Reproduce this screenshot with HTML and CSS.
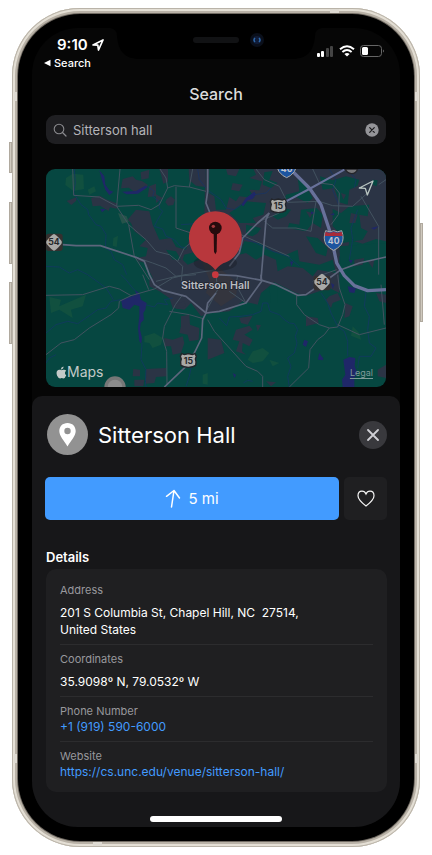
FILE: index.html
```html
<!DOCTYPE html>
<html lang="en">
<head>
<meta charset="utf-8">
<meta name="viewport" content="width=device-width, initial-scale=1">
<title>Sitterson Hall</title>
<link rel="stylesheet" href="styles.css">
</head>
<body>
<div class="phone">
  <i class="key key-mute"></i><i class="key key-up"></i><i class="key key-down"></i><i class="key key-power"></i>
  <i class="band band-top"></i><i class="band band-left-top"></i><i class="band band-right-top"></i>
  <i class="band band-left-low"></i><i class="band band-right-low"></i><i class="band band-bottom"></i>
  <div class="bezel">
    <svg class="notch" viewBox="0 0 212 31" aria-hidden="true">
      <path d="M0 0H212Q205 1 205 8C204 22 198 31 182 31H30C14 31 8 22 7 8Q7 1 0 0Z" fill="#000"/>
      <rect x="83" y="9" width="46" height="6" rx="3" fill="#111214"/>
      <circle cx="147" cy="12" r="7" fill="#0a0f1a"/>
      <circle cx="147" cy="12" r="4" fill="#101c38"/>
      <path d="M145 10q-2 2 0 4M149 10q2 2 0 4" stroke="#2d67a8" stroke-width="1.5" fill="none"/>
    </svg>
    <main class="screen">
      <header class="status">
        <div class="status-left">
          <div class="time">9:10
            <svg width="12" height="12" viewBox="0 0 12 12" aria-hidden="true"><path d="M1 6 11 1 6.500 11 5.800 6.200Z" fill="none" stroke="#fff" stroke-width="1.700" stroke-linejoin="round"/></svg>
          </div>
          <a class="back" href="#"><svg width="7" height="8" viewBox="0 0 7 8" aria-hidden="true"><path d="M0 4 6.500 .8V7.200Z" fill="#fff"/></svg>Search</a>
        </div>
        <div class="status-right">
          <svg width="17" height="12" viewBox="0 0 17 12" aria-hidden="true"><rect y="8" width="3" height="4" rx="1" fill="#fff"/><rect x="4" y="6" width="3" height="6" rx="1" fill="#fff"/><rect x="9" y="3" width="3" height="9" rx="1" fill="#444"/><rect x="13" y="1" width="3" height="11" rx="1" fill="#444"/></svg>
          <svg width="16" height="12" viewBox="0 0 16 12" aria-hidden="true"><path d="M1 4.300Q8-1.700 15 4.300M3.400 7Q8 3 12.600 7" fill="none" stroke="#fff" stroke-width="2"/><path d="M8 11.600 5.400 9Q8 7 10.600 9Z" fill="#fff"/></svg>
          <svg width="24" height="12" viewBox="0 0 24 12" aria-hidden="true"><rect x=".5" y=".5" width="21" height="11" rx="3" fill="none" stroke="#666"/><rect x="2" y="2" width="6" height="8" rx="1.500" fill="#fff"/><path d="M23 4.500Q24.500 6 23 7.500Z" fill="#888"/></svg>
        </div>
      </header>
      <h1 class="title">Search</h1>
      <form class="search">
        <svg width="14" height="14" viewBox="0 0 14 14" aria-hidden="true"><circle cx="6" cy="6" r="4.800" fill="none" stroke="#8a8a8e" stroke-width="1.100"/><path d="M9.500 9.500 13 13" stroke="#8a8a8e" stroke-width="1.200" stroke-linecap="round"/></svg>
        <input type="text" value="Sitterson hall" aria-label="Search">
        <button class="clear" type="button" aria-label="Clear"><svg width="14" height="14" viewBox="0 0 14 14"><circle cx="7" cy="7" r="6.700" fill="#949498"/><path d="M4.700 4.700 9.300 9.300M9.300 4.700 4.700 9.300" stroke="#1c1c1e" stroke-width="1.200" stroke-linecap="round"/></svg></button>
      </form>
      <section class="map" aria-label="Map">
        <svg class="map-art" viewBox="20 28 1020 654" preserveAspectRatio="xMidYMid slice">
          <defs>
            <g id="us"><path d="M-20-20-12-17 0-20 12-17 20-20 24-12 21-4Q25 6 22 15 15 20 0 21-15 20-22 15-25 6-21-4L-24-12Z" fill="#a9a9a7" stroke="#23252a" stroke-width="4"/></g>
            <g id="state"><path d="M0-25Q5-25 22-5 25 0 22 5 5 25 0 25-5 25-22 5-25 0-22-5-5-25 0-25Z" fill="#a9a9a7"/></g>
            <g id="interstate"><path d="M-24-29Q-10-22 0-29 10-22 24-29 33-5 23 12 12 26 0 30-12 26-23 12-33-5-24-29Z" fill="#1d55a0" stroke="#a9a9a7" stroke-width="3"/><path d="M-24-26Q-10-20 0-26 10-20 24-26L27-13H-27Z" fill="#a72c3a"/></g>
          </defs>
          <rect x="20" y="28" width="1020" height="654" fill="#064741"/>
          <g fill="#11503f"><path d="M80 55 100 42 132 45 134 88 102 94 78 76Z"/><path d="M145 90 165 80 170 95 150 105Z"/><path d="M222 235 236 228 232 262 220 258Z"/><path d="M30 412 65 420 60 440 105 420 140 405 130 440 95 450 100 475 60 450 35 460Z"/><path d="M315 530 345 520 370 535 365 555 340 565 330 550 315 548Z"/><path d="M640 575 670 565 690 580 670 605 640 610 625 600Z"/><path d="M690 600 720 610 700 620Z"/><path d="M490 645 505 640 505 675 490 672Z"/><path d="M940 500 960 520 965 540 935 528Z"/></g>
          <path d="M236 160 262 170 268 186 248 192Z" fill="#26534a"/>
          <g fill="#2b3445">
            <path d="M498 28H1040V245L1010 238 970 252 930 240 925 285 900 290 900 400 870 385 840 395 800 408 770 400 705 368 665 400 655 435 610 425 570 455 515 460 485 470 455 430 435 450 400 445 390 415 360 395 330 380 330 345 290 295 320 290 325 265 300 260 320 240 285 215 275 190 265 180 290 150 330 155 340 195 360 240 395 235 410 262 440 270 455 220 470 195 495 170Z"/>
            <path d="M155 115 182 108 198 118 235 132 232 147 212 143 208 154 182 138 160 140Z"/><path d="M82 124 112 112 110 124 96 136Z"/><path d="M250 58 280 50 290 60 308 64 326 76 316 90 285 96 268 84 245 86Z"/><path d="M304 38 330 30 328 56 306 60Z"/><path d="M360 28H386V66L372 72 366 48Z"/><path d="M330 80 350 72 350 104 370 115 350 130 350 110 325 112Z"/><path d="M382 118 395 110 407 120 402 136 386 138 378 128Z"/><path d="M448 28H498V82L470 78 450 62Z"/>
            <path d="M402 435 435 425 440 440 412 448Z"/><path d="M425 470 450 465 452 495 480 505 478 540 450 545 445 525 420 520 425 500Z"/><path d="M375 535 400 540 430 530 435 550 425 580 400 585 395 560 375 560Z"/><path d="M320 628 380 625 382 650 350 652 345 670 320 672Z"/><path d="M282 628 302 630 302 650 280 650Z"/><path d="M285 660 315 660 312 680 285 680Z"/><path d="M505 535 545 540 555 580 505 600Z"/>
            <path d="M600 475 640 468 625 495 605 490Z"/><path d="M590 510 630 498 640 510 615 525 640 540 630 560 610 550 608 575 620 585 590 575 600 545 580 540Z"/><path d="M650 495 665 497 655 515Z"/><path d="M680 665 710 668 695 680Z"/><path d="M800 470 835 475 838 490 800 500Z"/><path d="M870 410 895 400 905 420 880 430 875 445 860 420Z"/><path d="M918 430 940 440 930 470 915 475Z"/><path d="M1015 630 1040 615V655L1015 650Z"/><path d="M950 300 985 288 980 310 955 318Z"/><path d="M1010 400 1040 405V430L1020 425Z"/>
          </g>
          <g fill="#064741">
            <path d="M510 28H642L650 45 630 55 668 65 660 92 630 90 645 115 600 110 590 125 570 112 560 150 530 150 525 110 508 100Z"/><path d="M675 38 700 34 690 60 715 70 695 85 670 75Z"/><path d="M570 160 620 125 680 130 672 165 640 175 650 190 600 190 585 175Z"/><path d="M775 52 800 80 820 115 805 130 765 110 735 120 740 105 780 95Z"/><path d="M842 50 880 62 920 50 960 60 955 78 930 90 925 135 900 128 885 85 850 90Z"/><path d="M785 150 832 145 850 165 845 205 820 190 800 215 745 205 750 190 780 195Z"/><path d="M700 170 730 145 755 150 740 170 715 180Z"/><path d="M880 148 905 160 930 140 990 135 985 170 960 165 965 205 985 215 970 240 910 250 905 225 880 200Z"/><path d="M620 195 665 205 655 220 640 230 620 225Z"/><path d="M615 245 660 250 700 275 740 285 775 270 780 305 840 315 880 300 890 340 835 330 820 350 790 325 745 320 715 335 710 300 675 285 650 300 620 280 600 285Z"/><path d="M800 230 835 235 865 265 860 290 830 280Z"/><path d="M900 260 1040 250V395L985 395 940 375 905 330Z"/><path d="M435 285 475 275 480 300 445 315 430 300Z"/><path d="M380 270 410 275 425 300 400 300Z"/><path d="M300 305 318 310 340 355 320 365Z"/><path d="M690 380 715 380 715 430 695 430Z"/><path d="M1000 60 1015 62 1012 80 1000 75Z"/>
          </g>
          <path d="M480 290 540 325 595 370 590 410 545 440 500 400 510 360Z" fill="#34353e"/>
          <g fill="#2b3445"><path d="M560 28 600 28 590 50 565 45Z"/><path d="M580 70 610 75 600 95 575 90Z"/><path d="M945 300 975 295 970 315 945 320Z"/><path d="M985 305 1005 300 1000 325Z"/><path d="M800 155 820 160 812 175Z"/><path d="M935 160 955 165 948 190 930 190Z"/><path d="M905 100 920 105 912 120Z"/></g>
          <g fill="#1f2768"><path d="M180 32 195 50 198 75 210 92 222 96 210 106 198 90 190 68Z"/><path d="M248 96 290 94 318 78 325 82 296 102 262 104Z"/><path d="M183 148 200 148 188 158Z"/><path d="M606 135 620 115 645 96 650 104 640 118 625 122 612 140Z"/><path d="M245 420 272 412 290 405 288 392 300 400 305 420 322 430 318 450 312 460 314 480 304 490 302 510 308 535 306 552 300 545 296 505 300 470 300 440 285 435 270 450 250 445Z"/><path d="M912 600 930 592 948 595 946 620 955 640 945 655 945 682H910L908 660 918 645Z"/><path d="M838 590 852 595 850 602 838 600Z"/><path d="M795 540 806 545 800 562 790 555Z"/><path d="M836 600 840 580 852 598Z"/><path d="M580 640 590 645 586 655Z"/><path d="M815 155 828 160 815 164Z"/><path d="M872 165 884 160 885 167Z"/><path d="M752 305 762 306 756 320Z"/><path d="M928 300 940 302 935 312Z"/><path d="M995 205 1018 200 1005 210Z"/><path d="M925 380 950 385 945 400 930 398Z"/><path d="M875 370 885 375 880 388Z"/></g>
          <g class="stream">
            <path d="M105 28 108 70 103 100 125 135 145 150 148 165 170 195 185 200 200 225 198 265 215 275 225 300 250 315 262 345"/><path d="M20 320 60 322 90 340 115 330 145 345 180 370 200 385 210 400 222 420"/><path d="M20 520 50 495 85 485 115 492 150 468 175 450 200 445 215 425 245 420"/><path d="M20 610 30 595 50 585"/><path d="M325 80 345 95 340 110 360 125 360 145 370 155 355 180 345 200 370 208 380 230 405 240 425 262 440 265"/><path d="M245 345 260 360 280 385 292 398"/><path d="M318 435 345 442 355 430 385 435 375 420 400 415"/><path d="M308 550 305 600 320 630 318 665 320 682"/><path d="M475 28 480 60 500 85"/><path d="M510 95 545 120 560 145 585 150 606 135M645 105 680 100 695 85"/><path d="M530 190 570 205 610 235 650 250 700 275 745 290 780 320"/><path d="M540 475 562 498 570 472 605 470 640 465 665 455 670 430 685 430 692 455 720 465 735 480 750 490 765 492 775 510 768 530 773 550 765 580 745 595 755 620 745 650 750 682"/><path d="M845 400 865 430 875 460 895 500 915 515 925 545 925 590"/><path d="M980 395 975 440 990 470 985 510 990 550 1010 565 995 590 960 590 955 625"/><path d="M955 150 935 205 940 240 930 300"/><path d="M925 28 950 60 945 85"/><path d="M612 670 625 662 640 665"/><path d="M460 600 450 650 440 680"/><path d="M870 28 890 60 880 90 900 140"/><path d="M425 195 470 192"/>
          </g>
          <g class="road">
            <path d="M100 28 103 107 180 112 232 140 268 195 285 290 330 360"/><path d="M242 28 232 140 298 137 335 150 360 135 385 85 380 55 362 28M385 85 405 78 450 82 500 95M450 82 460 28M410 82V205L455 220"/><path d="M268 195 320 240 350 275 390 285 415 305 430 320 426 365"/><path d="M415 305 435 265 460 245M290 293 340 310 380 325 410 350 530 330M350 365 410 350 470 345"/><path d="M20 407 130 405 210 380 240 388 275 408 345 388 400 355 440 345"/><path d="M20 585 65 550 105 540 150 505 215 465 238 445 240 425 275 408"/><path d="M430 405 408 435 375 500 370 535 382 575 383 675M390 455 450 465 495 478M310 345 328 390"/><path d="M505 480 525 515 620 620 655 635 670 650V682"/><path d="M772 407V435L795 465 840 495 870 505 895 502 910 465 917 435 900 385 895 345"/><path d="M895 495 960 525 1040 505M870 505 855 525 835 540 812 570 808 625 750 682"/><path d="M1025 375 1035 495M1018 200V345"/><path d="M650 28 675 60 720 80 735 110 745 128 840 125 880 138 940 140 990 95M820 28 840 70 880 75 900 100 897 165 875 195M830 125 815 215 770 205 700 205 675 185M965 110 1018 200M1040 60 1018 75"/><path d="M605 225 750 290M660 185 720 160M570 395 620 430M892 330 850 345 820 365M530 345 535 390 500 455M595 348 590 375 620 430"/>
          </g>
          <g class="road main"><path d="M505 28V95L500 130 512 160"/><path d="M70 255 110 258H183L290 293 315 305 330 345 345 375 370 392 440 410 500 460 540 455 620 430 667 365 665 345"/><path d="M530 345 590 348 668 362 710 375 775 407 800 405 850 370 905 330 960 310 1040 292"/><path d="M690 160 680 180 665 360M690 160 655 190 610 235 600 280 570 320"/><path d="M500 460 490 480 487 535 465 580 440 620 375 682M500 460 505 430 530 400"/></g>
          <g class="road highway"><path d="M760 35 810 85 845 135 870 210 882 262 892 310 915 348 945 378 985 393 1040 390"/><path class="us-road" d="M915 30 810 88 740 125"/></g>
          <rect x="20" y="222" width="50" height="52" rx="8" fill="#34302f"/><use href="#state" x="44" y="248"/>
          <rect x="823" y="348" width="50" height="44" rx="8" fill="#34302f"/><use href="#state" x="848" y="367"/>
          <use href="#us" x="717" y="138"/><use href="#us" x="447" y="602"/><use href="#interstate" x="883" y="242"/><use href="#interstate" x="742" y="24"/>
          <path d="M918 28H955Q950 42 937 42 922 40 918 28Z" fill="#77777a" stroke="#25262b" stroke-width="4"/>
          <g class="shield"><text x="44" y="257">54</text><text x="848" y="376">54</text><text x="717" y="148">15</text><text x="447" y="612">15</text><text class="light" x="883" y="253">40</text><text class="light" x="742" y="37">40</text></g>
          <path d="M960 85 1001 64 984 106 978 86Z" fill="none" stroke="#b8c4c0" stroke-width="4" stroke-linejoin="round"/>
          <circle cx="227" cy="682" r="32" fill="#777"/><circle cx="227" cy="682" r="22" fill="#8b8b8b"/>
          <ellipse cx="528" cy="310" rx="65" ry="24" fill="#15181e" opacity=".35"/>
          <path d="M528 155A80 80 0 0 1 560 308Q543 313 528 331 513 313 496 308A80 80 0 0 1 528 155Z" fill="#b8373c"/>
          <circle cx="528" cy="345" r="10" fill="#c8383e"/>
          <path d="M523 220H533L532 276 528 284 524 276Z" fill="#250b0d"/><circle cx="528" cy="205" r="19" fill="#250b0d"/><circle cx="522" cy="200" r="5" fill="#a3383c"/>
          <text class="place" x="528" y="388">Sitterson Hall</text>
        </svg>
        <div class="brand"><svg width="11" height="13" viewBox="0 0 22 26" aria-hidden="true"><path d="M15 1q.3 3-1.600 4.700-1.500 1.500-3.600 1.300Q9.600 2.500 15 1ZM20.500 18.500Q18 25 14.700 25q-1.200 0-3.200-.9-2 .9-3.200.9Q5 25 2.200 19.500-.2 13 2.500 9.500 5 6.500 8.500 7.600q2 .7 3 .7t3-.8q4-.8 6 2-5.400 4 0 9Z" fill="#c3cac8"/></svg>Maps</div>
        <a class="legal" href="#">Legal</a>
      </section>
      <section class="sheet">
        <div class="sheet-head">
          <svg class="place-icon" width="41" height="41" viewBox="0 0 41 41" aria-hidden="true"><circle cx="20.500" cy="20.500" r="20.500" fill="#929292"/><path d="M20.500 9C15.500 9 12.300 12.600 12.300 17 12.300 22 17 26.500 20.500 32.500 24 26.500 28.700 22 28.700 17 28.700 12.600 25.500 9 20.500 9Z" fill="#fff"/><circle cx="20.500" cy="17" r="3.200" fill="#929292"/></svg>
          <h2>Sitterson Hall</h2>
          <button class="close" type="button" aria-label="Close"><svg width="12" height="12" viewBox="0 0 12 12"><path d="M1 1 11 11M11 1 1 11" stroke="#d0d0d5" stroke-width="1.800" stroke-linecap="round"/></svg></button>
        </div>
        <div class="actions">
          <button class="go" type="button"><svg width="16" height="20" viewBox="0 0 16 20" aria-hidden="true"><path d="M6.500 18 9 1.500M1.500 7.300 9 1.500 14.500 9" fill="none" stroke="#fff" stroke-width="1.500" stroke-linecap="round" stroke-linejoin="round"/></svg>5 mi</button>
          <button class="fav" type="button" aria-label="Favorite"><svg width="18" height="17" viewBox="0 0 18 17"><path d="M9 16C5 13 1 10 1 5.800 1 3 2.700 1.200 5 1.200 6.800 1.200 8.200 2.200 9 4 9.800 2.200 11.200 1.200 13 1.200 15.300 1.200 17 3 17 5.800 17 10 13 13 9 16Z" fill="none" stroke="#f4f4f4" stroke-width="1.200"/></svg></button>
        </div>
        <h3>Details</h3>
        <dl class="card">
          <div class="row spaced"><dt>Address</dt><dd>201 S Columbia St, Chapel Hill, NC &nbsp;27514,<br>United States</dd></div>
          <div class="row spaced"><dt>Coordinates</dt><dd>35.9098º N, 79.0532º W</dd></div>
          <div class="row"><dt>Phone Number</dt><dd><a href="tel:+19195906000">+1 (919) 590-6000</a></dd></div>
          <div class="row"><dt>Website</dt><dd><a href="https://cs.unc.edu/venue/sitterson-hall/">https://cs.unc.edu/venue/sitterson-hall/</a></dd></div>
        </dl>
        <div class="home"></div>
      </section>
    </main>
  </div>
</div>
</body>
</html>
```
FILE: styles.css
```css
* { box-sizing: border-box; }
body { margin: 0; padding: 8px 12px; background: #fff; color: #fff; font-family: Inter, Roboto, "Liberation Sans", sans-serif; }
h1, h2, h3, dl, dd { margin: 0; font-weight: 400; }
a { color: inherit; text-decoration: none; }
button { padding: 0; border: 0; color: inherit; font: inherit; background: none; display: flex; align-items: center; justify-content: center; }
svg { display: block; flex: none; }

.phone { position: relative; padding: 6px; border-radius: 68px; background: #d6d0c5; box-shadow: inset 0 0 0 1px #b9b3a8, inset 0 0 0 3px #e4dfd5, inset 0 0 0 5px #b9b2a7; }
.bezel { position: relative; padding: 14px; border-radius: 62px; background: #000; box-shadow: 0 0 0 1px #716b63; }
.notch { position: absolute; z-index: 1; top: 14px; left: 50%; width: 212px; height: 31px; transform: translateX(-50%); }
.screen { overflow: hidden; border-radius: 46px; background: #060606; }

.key { position: absolute; width: 3px; background: #cfc9be; border: 1px solid #b0a99e; }
.key-mute { left: -3px; top: 134px; height: 31px; }
.key-up { left: -3px; top: 194px; height: 62px; }
.key-down { left: -3px; top: 274px; height: 62px; }
.key-power { right: -3px; top: 215px; height: 99px; }
.band { position: absolute; background: #dedad2; }
.band-top, .band-bottom { width: 9px; height: 5px; }
.band-left-top, .band-right-top, .band-left-low, .band-right-low { width: 4px; height: 9px; }
.band-top { top: 1px; right: 81px; }
.band-bottom { bottom: 1px; left: 81px; }
.band-left-top { left: 2px; top: 84px; }
.band-right-top { right: 2px; top: 84px; }
.band-left-low { left: 2px; bottom: 84px; }
.band-right-low { right: 2px; bottom: 84px; }

.status { display: flex; justify-content: space-between; padding: 8px 16px 0 12px; }
.time { display: flex; align-items: center; gap: 4px; padding-left: 13px; font-size: 15px; font-weight: 600; line-height: 18px; }
.back { display: flex; align-items: center; gap: 3px; margin-top: 2px; font-size: 11px; font-weight: 500; line-height: 14px; }
.status-right { display: flex; gap: 5px; padding-top: 9px; }
.title { margin-top: 14px; font-size: 16px; font-weight: 500; line-height: 20px; text-align: center; color: #dcdcdc; }

.search { display: flex; align-items: center; gap: 6px; height: 29px; margin: 11px 14px 0; padding: 0 7px; border-radius: 9px; background: #1f1f22; }
.search input { flex: 1; min-width: 0; padding: 0; border: 0; outline: 0; background: none; color: #b4b4b8; font: 13px/18px Inter, Roboto, sans-serif; }

.map { position: relative; overflow: hidden; margin: 25px 14px 0; border-radius: 9px; }
.map-art { width: 100%; height: auto; }
.stream { fill: none; stroke: #15356a; stroke-width: 2; stroke-linejoin: round; }
.road { fill: none; stroke: #435360; stroke-width: 3; stroke-linejoin: round; }
.main { stroke: #5d667c; stroke-width: 5; }
.highway { stroke: #68719a; stroke-width: 10; }
.us-road { stroke-width: 6; }
.shield { font-size: 26px; font-weight: 700; text-anchor: middle; fill: #27292c; }
.light { fill: #c0c6d0; }
.place { font-size: 32px; font-weight: 600; text-anchor: middle; fill: #b9bcc1; stroke: #20242c; stroke-width: 4; paint-order: stroke; }
.brand { position: absolute; left: 10px; bottom: 6px; display: flex; align-items: center; font-size: 14px; line-height: 18px; color: #c3cac8; }
.legal { position: absolute; right: 13px; bottom: 8px; font-size: 9px; line-height: 12px; color: #7f9a98; text-decoration: underline; text-underline-offset: 2px; }

.sheet { margin-top: 9px; padding: 18px 13px 5px; border-radius: 10px 10px 0 0; background: #171719; }
.sheet-head { display: flex; align-items: center; gap: 10px; padding-left: 2px; }
.sheet-head h2 { flex: 1; font-size: 22px; line-height: 28px; }
.close { width: 28px; height: 28px; border-radius: 50%; background: #39393d; }
.actions { display: flex; gap: 5px; margin-top: 22px; }
.actions button { height: 43px; border-radius: 5px; }
.go { flex: 1; gap: 7px; background: #429bff; font-size: 15px; }
.fav { width: 43px; background: #1f1f21; }
.sheet h3 { margin-top: 27px; padding-left: 1px; font-size: 13px; font-weight: 600; line-height: 20px; }

.card { margin: 2px 0 0 1px; padding: 7px 14px 6px; border-radius: 10px; background: #1f1f21; font-size: 12px; line-height: 17px; }
.row { padding: 7px 0 6px; border-bottom: 1px solid #2c2c2e; }
.row:last-child { border-bottom: 0; }
.row dt { font-size: 11px; line-height: 14px; color: #98989d; }
.spaced dt { margin-bottom: 7px; }
.card a { color: #429bff; }
.home { width: 132px; height: 6px; margin: 24px auto 0; border-radius: 3px; background: #fff; }
```
